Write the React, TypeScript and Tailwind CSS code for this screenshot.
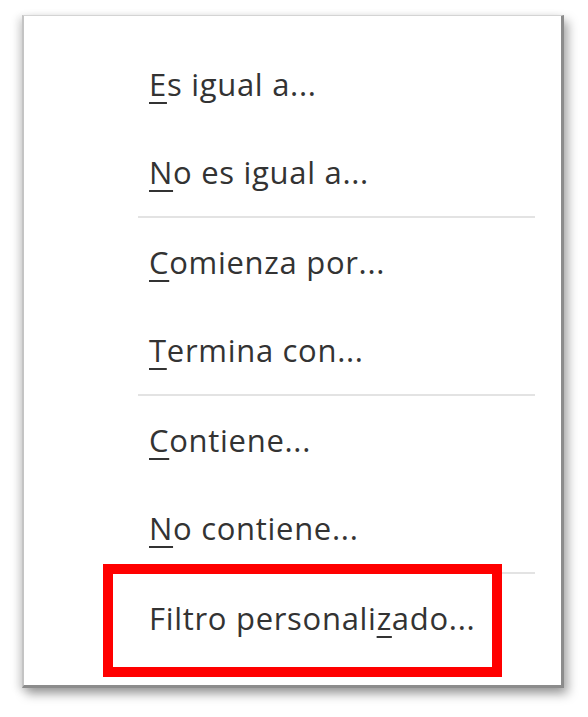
import React from "react";

const U = ({ children }: { children: React.ReactNode }) => (
  <span className="underline decoration-2 underline-offset-[6px]">{children}</span>
);

const Row = ({ children }: { children: React.ReactNode }) => (
  <div className="h-[88px] flex items-center pl-[125px] text-[31px] tracking-[0.7px] text-[#333333]">
    <span>{children}</span>
  </div>
);

const Sep = () => <div className="h-[2px] bg-[#e3e3e3] ml-[114px] mr-[26px]" />;

export default function App() {
  return (
    <div
      className="w-[588px] h-[717px] bg-white pt-[15px] pl-[22px]"
      style={{ fontFamily: '"Open Sans", "Noto Sans", sans-serif' }}
    >
      <div className="w-[542px] h-[673px] bg-white border-t border-l-2 border-r-[3px] border-b-[3px] border-t-[#d4d4d4] border-l-[#c4c4c4] border-r-[#8c8c8c] border-b-[#8c8c8c] shadow-[4px_6px_10px_rgba(0,0,0,0.35),-4px_2px_8px_rgba(0,0,0,0.12)] pt-[24px]">
        <Row>
          <U>E</U>s igual a...
        </Row>
        <Row>
          <U>N</U>o es igual a...
        </Row>
        <Sep />
        <Row>
          <U>C</U>omienza por...
        </Row>
        <Row>
          <U>T</U>ermina con...
        </Row>
        <Sep />
        <Row>
          <U>C</U>ontiene...
        </Row>
        <Row>
          <U>N</U>o contiene...
        </Row>
        <Sep />
        <div className="relative">
          <Row>
            Filtro personali<U>z</U>ado...
          </Row>
          <div className="absolute top-[-10px] left-[79px] w-[399px] h-[113px] border-[10px] border-[#ff0000]" />
        </div>
      </div>
    </div>
  );
}
